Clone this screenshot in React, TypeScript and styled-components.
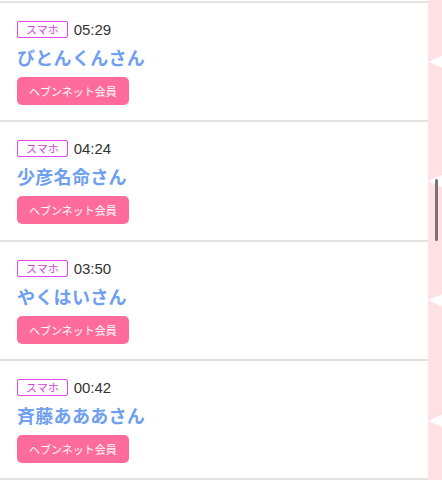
import React from "react";
import styled, { createGlobalStyle } from "styled-components";

const GlobalStyle = createGlobalStyle`
  *, *::before, *::after { box-sizing: border-box; }
  html, body { margin: 0; padding: 0; background: #fff; }
  body { font-family: "Noto Sans CJK JP", "Liberation Sans", sans-serif; overflow: hidden; }
`;

const Page = styled.div`
  position: relative;
  width: 442px;
  height: 480px;
  overflow: hidden;
  padding-top: 1px;
  background: linear-gradient(to right, #ffffff 428px, #ffe1e3 428px);
`;

const Row = styled.div`
  display: grid;
  grid-template-columns: 428px 14px;
`;

const Card = styled.div<{ $last?: boolean }>`
  height: ${(p) => (p.$last ? "121.33px" : "119.33px")};
  border-top: 2px solid #e2e2e2;
  border-bottom: ${(p) => (p.$last ? "2px solid #e2e2e2" : "none")};
  padding: 18px 17px 0;
  display: flex;
  flex-direction: column;
  align-items: flex-start;
  background: #fff;
`;

const Edge = styled.div`
  background: #ffe1e3;
  display: flex;
  align-items: center;
  justify-content: flex-end;
  padding-top: 2px;
`;

const Notch = styled.span`
  width: 14px;
  height: 12px;
  background: #fff;
  clip-path: polygon(100% 0, 0 50%, 100% 100%);
`;

const Meta = styled.div`
  display: flex;
  align-items: center;
  gap: 6px;
  height: 17px;
`;

const Device = styled.span`
  height: 17px;
  padding: 0 8px;
  border: 1px solid #e24ae6;
  border-radius: 2px;
  color: #d83fdc;
  font-size: 11px;
  line-height: 15px;
  display: inline-flex;
  align-items: center;
`;

const Time = styled.span`
  font-family: "Liberation Sans", "Noto Sans CJK JP", sans-serif;
  font-size: 15px;
  color: #333;
  line-height: 17px;
`;

const Name = styled.div`
  margin-top: 7px;
  font-size: 18px;
  font-weight: 700;
  line-height: 25px;
  color: #6e9ff0;
  letter-spacing: 0.3px;
`;

const Member = styled.span`
  margin-top: 7px;
  height: 28px;
  padding: 0 12px;
  border-radius: 5px;
  background: #ff6b9b;
  color: #fff;
  font-size: 11px;
  display: inline-flex;
  align-items: center;
`;

const Thumb = styled.div`
  position: absolute;
  left: 435px;
  top: 179px;
  width: 3px;
  height: 62px;
  border-radius: 2px;
  background: #7b7373;
`;

const items = [
  { time: "05:29", name: "びとんくんさん" },
  { time: "04:24", name: "少彦名命さん" },
  { time: "03:50", name: "やくはいさん" },
  { time: "00:42", name: "斉藤あああさん" },
];

export default function App() {
  return (
    <>
      <GlobalStyle />
      <Page>
        {items.map((it, i) => (
          <Row key={it.time}>
            <Card $last={i === items.length - 1}>
              <Meta>
                <Device>スマホ</Device>
                <Time>{it.time}</Time>
              </Meta>
              <Name>{it.name}</Name>
              <Member>ヘブンネット会員</Member>
            </Card>
            <Edge>
              <Notch />
            </Edge>
          </Row>
        ))}
        <Thumb />
      </Page>
    </>
  );
}
